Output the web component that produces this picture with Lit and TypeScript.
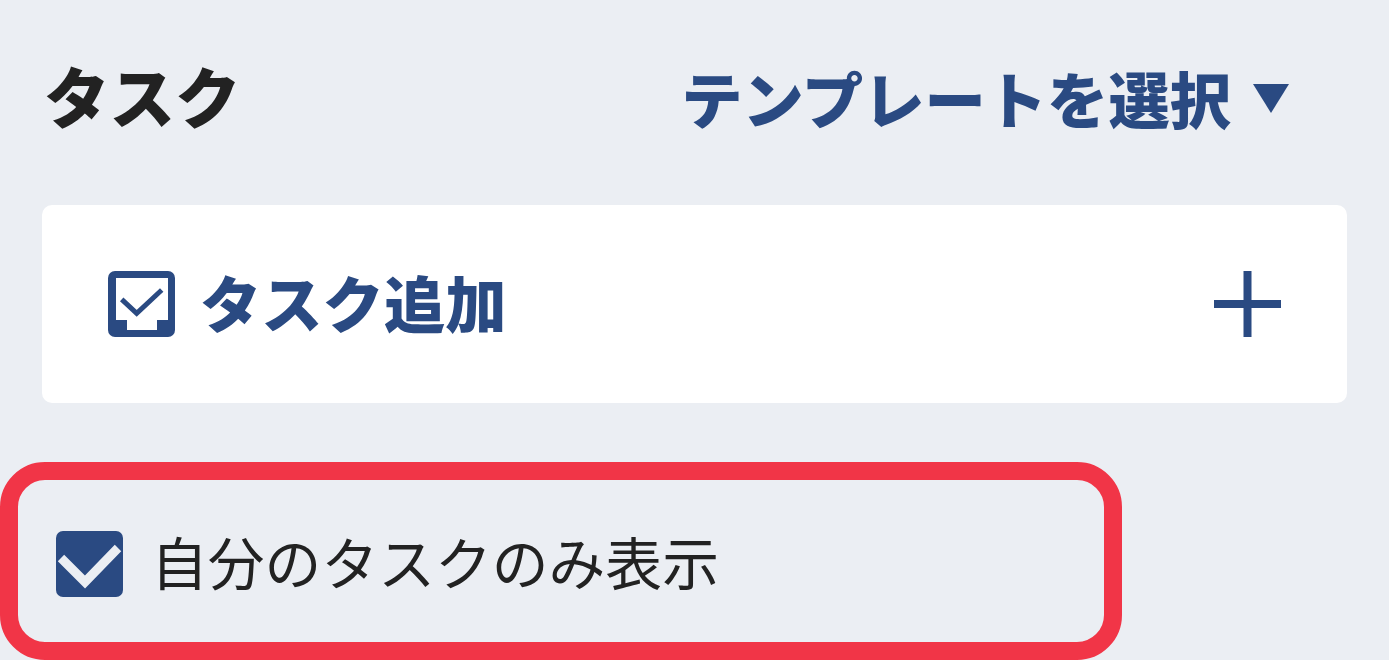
import { LitElement, html, css } from "lit";
import { customElement } from "lit/decorators.js";

@customElement("app-root")
export class AppRoot extends LitElement {
  static styles = css`
    :host {
      display: block;
      width: 1389px;
      height: 660px;
      overflow: hidden;
      background: #ebeef3;
      font-family: "Noto Sans CJK JP", "Noto Sans", sans-serif;
      color: #222;
    }
    * { box-sizing: border-box; }
    .header {
      height: 205px;
      padding: 0 100px 0 44px;
      display: flex;
      justify-content: space-between;
      align-items: flex-start;
    }
    .title {
      margin: 57px 0 0;
      font-size: 65.5px;
      line-height: 76px;
      font-weight: 900;
    }
    .template {
      margin-top: 60px;
      display: flex;
      align-items: center;
      gap: 22px;
      font-size: 61.3px;
      line-height: 76px;
      font-weight: 900;
      color: #2a4a82;
    }
    .template svg { width: 36px; height: 29px; display: block; }
    .card {
      margin: 0 42px;
      height: 198px;
      background: #fff;
      border-radius: 10px;
      padding: 0 66px;
      display: flex;
      align-items: center;
      justify-content: space-between;
    }
    .add {
      display: flex;
      align-items: center;
      gap: 25px;
      font-size: 61.3px;
      line-height: 76px;
      font-weight: 900;
      color: #2a4a82;
    }
    .add span { margin-top: -5px; }
    .icon { width: 67px; height: 66px; display: block; flex: none; }
    .highlight {
      margin-top: 59px;
      width: 1122px;
      height: 198px;
      border: 18px solid #f13547;
      border-radius: 45px;
      padding: 0 38px;
      display: flex;
      align-items: center;
      gap: 28px;
      font-size: 56.8px;
      line-height: 76px;
      color: #222;
    }
    .highlight .icon { margin-top: 6px; }
    .highlight span { margin-top: -3px; }
  `;

  render() {
    return html`
      <div class="header">
        <h1 class="title">タスク</h1>
        <div class="template">
          <span>テンプレートを選択</span>
          <svg viewBox="0 0 36 29"><path d="M0 0H36L18 29Z" fill="#2a4a82"></path></svg>
        </div>
      </div>
      <div class="card">
        <div class="add">
          <svg class="icon" viewBox="0 0 67 66">
            <rect width="67" height="66" rx="7" fill="#2a4a82"></rect>
            <path d="M8 7H60V49H49V59H19V49H8Z" fill="#fff"></path>
            <path d="M13.7 28.3L28.7 42.3L53.7 19" fill="none" stroke="#2a4a82" stroke-width="5"></path>
          </svg>
          <span>タスク追加</span>
        </div>
        <svg class="icon" viewBox="0 0 67 66">
          <path d="M0 33H67M33.5 0V66" fill="none" stroke="#2a4a82" stroke-width="8"></path>
        </svg>
      </div>
      <div class="highlight">
        <svg class="icon" viewBox="0 0 67 66">
          <rect width="67" height="66" rx="7" fill="#2a4a82"></rect>
          <path d="M5 27L29 51L62 17" fill="none" stroke="#ebeef3" stroke-width="9"></path>
        </svg>
        <span>自分のタスクのみ表示</span>
      </div>
    `;
  }
}
